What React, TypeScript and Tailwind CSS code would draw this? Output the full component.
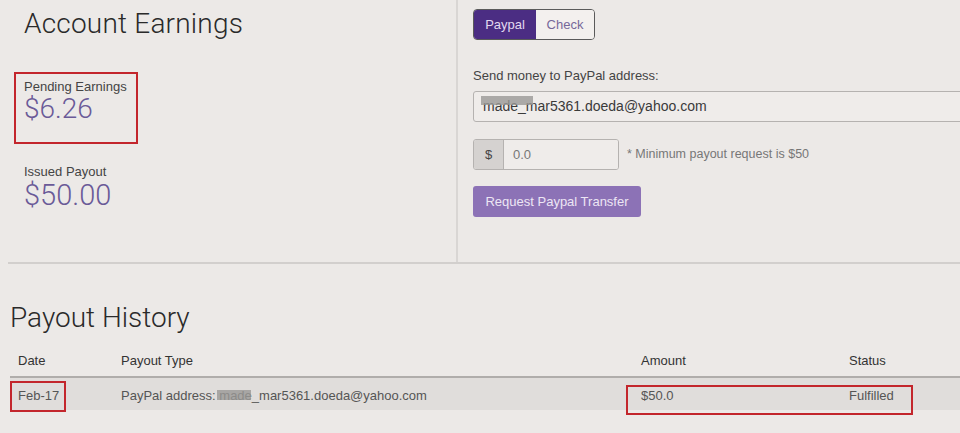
import React from "react";

const Blur = ({ className }: { className: string }) => (
  <span className={"absolute bg-[#9a9896] opacity-80 " + className} />
);

export default function App() {
  return (
    <div className="relative w-[960px] h-[433px] overflow-hidden bg-[#ece9e7] font-['Liberation_Sans',Arial,sans-serif] text-[#333]">
      {/* Top section */}
      <div className="flex h-[264px] ml-[8px] border-b-2 border-[#d2cfcd]">
        {/* Left */}
        <div className="w-[450px] shrink-0 border-r-2 border-[#d9d6d4] pl-[16px]">
          <h1 className="font-['Roboto',sans-serif] font-light text-[28px] leading-none text-[#2a2a2a] mt-[10px] tracking-[0.2px]">
            Account Earnings
          </h1>
          <div className="relative mt-[34px]">
            <div className="text-[13px] leading-none text-[#444] pt-[8px]">Pending Earnings</div>
            <div className="font-['Roboto',sans-serif] font-light text-[28px] leading-none text-[#6a5a98] mt-[2px]">
              $6.26
            </div>
            <div className="absolute left-[-10px] top-[0px] w-[124px] h-[72px] border-2 border-[#c3262c]" />
          </div>
          <div className="mt-[42px] text-[13px] leading-none text-[#444]">Issued Payout</div>
          <div className="font-['Roboto',sans-serif] font-light text-[29px] leading-none text-[#6a5a98] mt-[3px]">
            $50.00
          </div>
        </div>
        {/* Right */}
        <div className="flex-1 min-w-0 pl-[15px] pt-[9px]">
          <div className="flex w-[122px] h-[31px] rounded-[4px] border border-[#5a5a5a] overflow-hidden text-[13px]">
            <div className="w-[62px] bg-[#4b2d83] text-[#e2d9f0] flex items-center justify-center">Paypal</div>
            <div className="flex-1 bg-[#f3f0ee] text-[#76689a] flex items-center justify-center">Check</div>
          </div>
          <div className="mt-[29px] text-[13px] leading-none text-[#444]">Send money to PayPal address:</div>
          <div className="relative mt-[9px] h-[31px] w-[520px] border border-[#b5b2b0] rounded-[3px] bg-[#efecea] flex items-center pl-[9px] text-[14px] text-[#3a3a3a]">
            <span className="relative">
              made_mar5361.doeda@yahoo.com
              <Blur className="left-[-2px] top-[0px] w-[52px] h-[9px]" />
            </span>
          </div>
          <div className="mt-[17px] flex items-center">
            <div className="flex h-[31px] w-[146px] border border-[#b5b2b0] rounded-[3px] overflow-hidden">
              <div className="w-[30px] bg-[#d5d2d0] border-r border-[#b5b2b0] flex items-center justify-center text-[13px] text-[#444]">$</div>
              <div className="flex-1 bg-[#efecea] flex items-center pl-[9px] text-[13px] text-[#777]">0.0</div>
            </div>
            <div className="ml-[8px] text-[12.5px] text-[#777]">* Minimum payout request is $50</div>
          </div>
          <div className="mt-[16px] w-[168px] h-[31px] rounded-[3px] bg-[#8c72b6] flex items-center justify-center text-[13px] text-[#ece6f4]">
            Request Paypal Transfer
          </div>
        </div>
      </div>

      {/* Bottom section */}
      <div className="pl-[10px]">
        <h2 className="font-['Roboto',sans-serif] font-light text-[28px] leading-none text-[#2a2a2a] mt-[40px]">
          Payout History
        </h2>
        <div className="relative mt-[14px] text-[13px]">
          <div className="grid grid-cols-[103px_520px_208px_1fr] h-[32px] items-center border-b-2 border-[#b0adab] text-[#333]">
            <div className="pl-[8px]">Date</div>
            <div className="pl-[8px]">Payout Type</div>
            <div className="pl-[8px]">Amount</div>
            <div className="pl-[8px]">Status</div>
          </div>
          <div className="grid grid-cols-[103px_520px_208px_1fr] h-[32px] items-center bg-[#e0dddb] text-[#555]">
            <div className="pl-[8px] pt-[3px]">Feb-17</div>
            <div className="pl-[8px] pt-[3px]">
              PayPal address:{" "}
              <span className="relative">
                made_mar5361.doeda@yahoo.com
                <Blur className="left-[-2px] top-[2px] w-[34px] h-[10px]" />
              </span>
            </div>
            <div className="pl-[8px] pt-[3px]">$50.0</div>
            <div className="pl-[8px] pt-[3px]">Fulfilled</div>
          </div>
          <div className="absolute left-0 top-[35px] w-[56px] h-[31px] border-2 border-[#c3262c]" />
          <div className="absolute left-[616px] top-[39px] w-[287px] h-[30px] border-2 border-[#c3262c]" />
        </div>
      </div>
    </div>
  );
}
